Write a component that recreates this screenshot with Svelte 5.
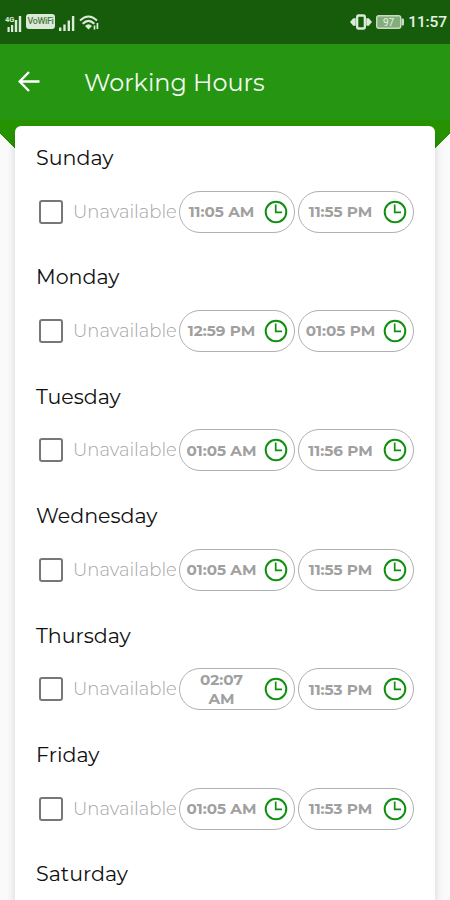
<script>
  let days = $state([
    { name: "Sunday", from: "11:05 AM", to: "11:55 PM", off: false },
    { name: "Monday", from: "12:59 PM", to: "01:05 PM", off: false },
    { name: "Tuesday", from: "01:05 AM", to: "11:56 PM", off: false },
    { name: "Wednesday", from: "01:05 AM", to: "11:55 PM", off: false },
    { name: "Thursday", from: "02:07 AM", to: "11:53 PM", off: false },
    { name: "Friday", from: "01:05 AM", to: "11:53 PM", off: false },
    { name: "Saturday" },
  ]);
</script>

{#snippet timeButton(time)}
  <button class="time">
    <span>{time}</span>
    <svg width="24" height="24" viewBox="0 0 24 24" fill="none" stroke="#109010">
      <circle cx="12" cy="12" r="10.3" stroke-width="2" />
      <path d="M11.7 4.5V12.4H18" stroke-width="1.7" />
    </svg>
  </button>
{/snippet}

<div class="screen">
  <div class="status">
    <div class="status-left">
      <svg width="17" height="17" viewBox="0 0 17 17" fill="#dcebd9">
        <path d="M2.5 12h2.2v5H2.5zM6 10h2.2v7H6zM9.8 5h2.4v12H9.8zM13.8 1h2.4v16h-2.4z" />
        <text x="0" y="7" font-size="7.5">4G</text>
      </svg>
      <span class="vowifi">VoWiFi</span>
      <svg width="16" height="16" viewBox="0 0 16 16" fill="#dcebd9">
        <path d="M0 12.5h2.4V16H0zM4.3 9.5h2.4V16H4.3zM8.6 5.5H11V16H8.6zM12.9 1h2.4v15h-2.4z" />
      </svg>
      <svg width="21" height="16" viewBox="0 0 21 16" fill="none" stroke="#dcebd9">
        <path d="M1 5.5Q9.5-2.5 18 5.5" stroke-width="1.8" />
        <path d="M3.7 8.8Q9.5 3 15.3 8.8" stroke-width="2.2" />
        <path d="M6 11Q9.5 7.5 13 11L9.5 14.5z" fill="#dcebd9" stroke="none" />
        <path d="M15.5 14.5v-4M18.4 8v6" stroke-width="1.7" />
      </svg>
    </div>
    <div class="status-right">
      <svg width="22" height="16" viewBox="0 0 23 16" fill="#dcebd9">
        <path d="M0 8l3-3.5v7zM3 4h3v8H3zM17 4h3v8h-3zM23 8l-3-3.5v7z" />
        <rect x="7.5" y="1.2" width="8" height="13.6" rx="1.5" fill="none" stroke="#dcebd9" stroke-width="2.4" />
      </svg>
      <svg width="28" height="14" viewBox="0 0 28 14">
        <rect x="0.7" y="0.7" width="24" height="12.6" rx="2" fill="#84ad7c" stroke="#c8dcc4" stroke-width="1.4" />
        <path d="M25.5 3.5h1.5q1 0 1 1v5q0 1-1 1h-1.5z" fill="#c8dcc4" />
        <text x="12.5" y="10.6" text-anchor="middle" font-size="10" fill="#e6f2e4">97</text>
      </svg>
      <span class="clock">11:57</span>
    </div>
  </div>

  <header>
    <svg width="22" height="22" viewBox="0 0 22 22" fill="none" stroke="#fff" stroke-width="2.4">
      <path d="M21.5 10.5H2M11 1L1.7 10.5l9.3 9.5" />
    </svg>
    <h1>Working Hours</h1>
  </header>

  <main>
    <div class="card">
      {#each days as day (day.name)}
        <section>
          <h2>{day.name}</h2>
          {#if day.from}
            <div class="row">
              <label>
                <input type="checkbox" bind:checked={day.off} />
                <span>Unavailable</span>
              </label>
              {@render timeButton(day.from)}
              {@render timeButton(day.to)}
            </div>
          {/if}
        </section>
      {/each}
    </div>
  </main>
</div>

<style>
  .screen {
    width: 450px;
    height: 900px;
    overflow: hidden;
    display: flex;
    flex-direction: column;
    background: #fafafa;
    font-family: Montserrat, Inter, sans-serif;
  }

  .status {
    flex: none;
    height: 44px;
    display: flex;
    justify-content: space-between;
    background: #175c0b;
    color: #e6f2e4;
  }

  .status-left,
  .status-right {
    display: flex;
    align-items: center;
    font-family: Roboto, sans-serif;
  }

  .status-left {
    padding: 2px 0 0 5px;
    gap: 4px;
    font-weight: 700;
  }

  .status-right {
    padding-right: 3px;
    gap: 4px;
  }

  .vowifi {
    width: 29px;
    height: 15px;
    margin-bottom: 4px;
    border-radius: 3px;
    background: #dcebd9;
    color: #4c7b43;
    font-size: 9px;
    line-height: 15px;
    font-weight: 500;
    letter-spacing: -0.4px;
    text-align: center;
  }

  .clock {
    font-size: 15.5px;
    font-weight: 500;
    letter-spacing: -0.1px;
  }

  header {
    flex: none;
    height: 76px;
    display: flex;
    align-items: center;
    padding-left: 18px;
    gap: 44px;
    background: #259512;
  }

  h1 {
    margin: 0;
    padding-top: 1px;
    color: #f4fbf2;
    font-size: 23.9px;
    font-weight: 400;
  }

  /* green band with a slanted corner on each side of the card */
  main {
    flex: 1;
    min-height: 0;
    padding: 6px 15px 0;
    background:
      linear-gradient(#279200, #279200) 0 0 / 100% 14px no-repeat,
      linear-gradient(to top right, transparent 50%, #279200 50.5%) 0 14px / 15px 15px no-repeat,
      linear-gradient(to top left, transparent 50%, #279200 50.5%) 100% 14px / 15px 15px no-repeat;
  }

  .card {
    box-sizing: border-box;
    height: 100%;
    padding: 20px 21px 0;
    overflow: hidden;
    border-radius: 6px 6px 0 0;
    background: #fff;
    box-shadow: 0 10px 8px rgba(0, 0, 0, 0.16);
  }

  section {
    height: 119.4px;
  }

  h2 {
    margin: 0 0 20.6px;
    color: #111;
    font-size: 20.6px;
    line-height: 24px;
    font-weight: 400;
  }

  .row {
    display: flex;
    height: 42px;
    gap: 3px;
  }

  label {
    display: flex;
    align-items: center;
    width: 140px;
    padding-left: 3px;
    box-sizing: border-box;
    white-space: nowrap;
    color: #a3a3a3;
    font-size: 18px;
    font-weight: 300;
  }

  input {
    appearance: none;
    flex: none;
    box-sizing: border-box;
    width: 24px;
    height: 24px;
    margin: 0 10px 0 0;
    border: 2.5px solid #777;
    border-radius: 3px;
  }

  input:checked {
    background: #259512;
  }

  .time {
    box-sizing: border-box;
    flex: none;
    width: 116px;
    display: flex;
    align-items: center;
    justify-content: space-between;
    padding: 0 6px 0 5px;
    border: 1.3px solid #b0b0b0;
    border-radius: 21px;
    background: none;
    color: #a0a0a0;
    font: 700 15.2px/19px Montserrat, Inter, sans-serif;
  }

  .time span {
    width: 73px;
    text-align: center;
  }

  .time svg {
    flex: none;
  }
</style>
